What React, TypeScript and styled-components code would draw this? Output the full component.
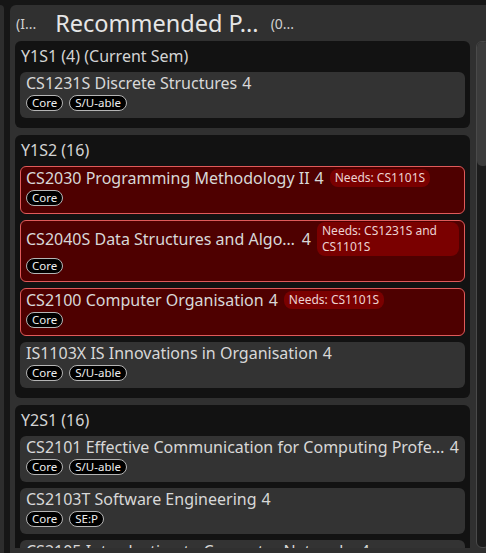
import React from "react";
import styled, { createGlobalStyle } from "styled-components";

const GlobalStyle = createGlobalStyle`
  html, body {
    margin: 0;
    padding: 0;
    background: #161616;
    overflow: hidden;
  }
  body {
    font-family: "Noto Sans", "Open Sans", sans-serif;
    color: #d6d6d6;
  }
`;

const Screen = styled.div`
  display: flex;
  gap: 6px;
  height: 553px;
  padding-top: 5px;
  box-sizing: border-box;
  overflow: hidden;
`;

const SidePanel = styled.div`
  flex: 0 0 4px;
  background: #2d2d2d;
  border-top-right-radius: 6px;
`;

const MainPanel = styled.div`
  flex: 0 0 486px;
  display: flex;
  flex-direction: column;
  background: #303030;
  border-top-left-radius: 6px;
  padding: 0 0 5px 5px;
  box-sizing: border-box;
`;

const Header = styled.div`
  flex: 0 0 36px;
  display: flex;
  align-items: center;
  padding-left: 1px;
  white-space: nowrap;
`;

const SmallLabel = styled.span<{ $gap?: number }>`
  font-size: 14px;
  color: #cfcfcf;
  margin-left: ${(p) => p.$gap ?? 0}px;
`;

const Title = styled.h1`
  margin: 0 0 0 19px;
  font-size: 23.5px;
  font-weight: 400;
  color: #e6e6e6;
`;

const Body = styled.div`
  flex: 1;
  min-height: 0;
  display: flex;
  gap: 6px;
`;

const Viewport = styled.div`
  flex: 0 0 455px;
  overflow: hidden;
  display: flex;
  flex-direction: column;
  gap: 7px;
`;

const Scrollbar = styled.div`
  flex: 0 0 14px;
  box-sizing: border-box;
  border: 1px solid #4a4a4a;
  border-radius: 6px;
  background: #1c1c1c;
  overflow: hidden;
`;

const Thumb = styled.div`
  height: 124px;
  background: #3c3c3c;
  border-radius: 0 0 5px 5px;
`;

const Section = styled.section`
  flex-shrink: 0;
  background: #121212;
  border-radius: 6px;
  padding: 5px 5px 10px;
  display: flex;
  flex-direction: column;
  gap: 6px;
`;

const SectionTitle = styled.div`
  font-size: 16px;
  line-height: 20px;
  color: #d4d4d4;
  padding-left: 1px;
`;

const Card = styled.div<{ $blocked?: boolean }>`
  border-radius: 6px;
  background: ${(p) => (p.$blocked ? "#4e0000" : "#333333")};
  border: ${(p) => (p.$blocked ? "1px solid #e05a5a" : "none")};
  padding: ${(p) => (p.$blocked ? "1px 5px 7px" : "1px 6px 7px")};
`;

const TitleRow = styled.div`
  display: flex;
  align-items: center;
  min-height: 20px;
  font-size: 16px;
  line-height: 20px;
  color: #d8d8d8;
  white-space: nowrap;
`;

const Name = styled.span`
  flex: 0 1 auto;
  min-width: 0;
  overflow: hidden;
  text-overflow: ellipsis;
`;

const Credits = styled.span`
  flex: none;
  margin-left: 5px;
`;

const Needs = styled.span`
  flex: none;
  max-width: 142px;
  box-sizing: border-box;
  margin-left: 6px;
  padding: 1px 5px;
  border-radius: 8px;
  background: #7a0000;
  color: #ecd2d2;
  font-size: 12px;
  line-height: 16px;
  white-space: normal;
`;

const Tags = styled.div`
  display: flex;
  gap: 6px;
  margin-top: 2px;
`;

const Tag = styled.span`
  box-sizing: border-box;
  height: 16px;
  padding: 0 5px;
  border: 1px solid #b5b5b5;
  border-radius: 8px;
  background: #000;
  color: #eeeeee;
  font-size: 11.5px;
  line-height: 14px;
`;

type Mod = {
  code: string;
  name: string;
  mc: number;
  tags: string[];
  needs?: string;
};

type Sem = { title: string; mods: Mod[] };

const sems: Sem[] = [
  {
    title: "Y1S1 (4) (Current Sem)",
    mods: [{ code: "CS1231S", name: "Discrete Structures", mc: 4, tags: ["Core", "S/U-able"] }],
  },
  {
    title: "Y1S2 (16)",
    mods: [
      { code: "CS2030", name: "Programming Methodology II", mc: 4, tags: ["Core"], needs: "Needs: CS1101S" },
      { code: "CS2040S", name: "Data Structures and Algorithms", mc: 4, tags: ["Core"], needs: "Needs: CS1231S and CS1101S" },
      { code: "CS2100", name: "Computer Organisation", mc: 4, tags: ["Core"], needs: "Needs: CS1101S" },
      { code: "IS1103X", name: "IS Innovations in Organisation", mc: 4, tags: ["Core", "S/U-able"] },
    ],
  },
  {
    title: "Y2S1 (16)",
    mods: [
      { code: "CS2101", name: "Effective Communication for Computing Professionals", mc: 4, tags: ["Core", "S/U-able"] },
      { code: "CS2103T", name: "Software Engineering", mc: 4, tags: ["Core", "SE:P"] },
      { code: "CS2105", name: "Introduction to Computer Networks", mc: 4, tags: ["Core"] },
      { code: "CS2106", name: "Introduction to Operating Systems", mc: 4, tags: ["Core"] },
    ],
  },
];

function ModuleCard({ mod }: { mod: Mod }) {
  return (
    <Card $blocked={!!mod.needs}>
      <TitleRow>
        <Name>
          {mod.code} {mod.name}
        </Name>
        <Credits>{mod.mc}</Credits>
        {mod.needs && <Needs>{mod.needs}</Needs>}
      </TitleRow>
      <Tags>
        {mod.tags.map((t) => (
          <Tag key={t}>{t}</Tag>
        ))}
      </Tags>
    </Card>
  );
}

export default function App() {
  return (
    <>
      <GlobalStyle />
      <Screen>
        <SidePanel />
        <MainPanel>
          <Header>
            <SmallLabel>(I...</SmallLabel>
            <Title>Recommended P...</Title>
            <SmallLabel $gap={12}>(0...</SmallLabel>
          </Header>
          <Body>
            <Viewport>
              {sems.map((s) => (
                <Section key={s.title}>
                  <SectionTitle>{s.title}</SectionTitle>
                  {s.mods.map((m) => (
                    <ModuleCard key={m.code} mod={m} />
                  ))}
                </Section>
              ))}
            </Viewport>
            <Scrollbar>
              <Thumb />
            </Scrollbar>
          </Body>
        </MainPanel>
      </Screen>
    </>
  );
}
